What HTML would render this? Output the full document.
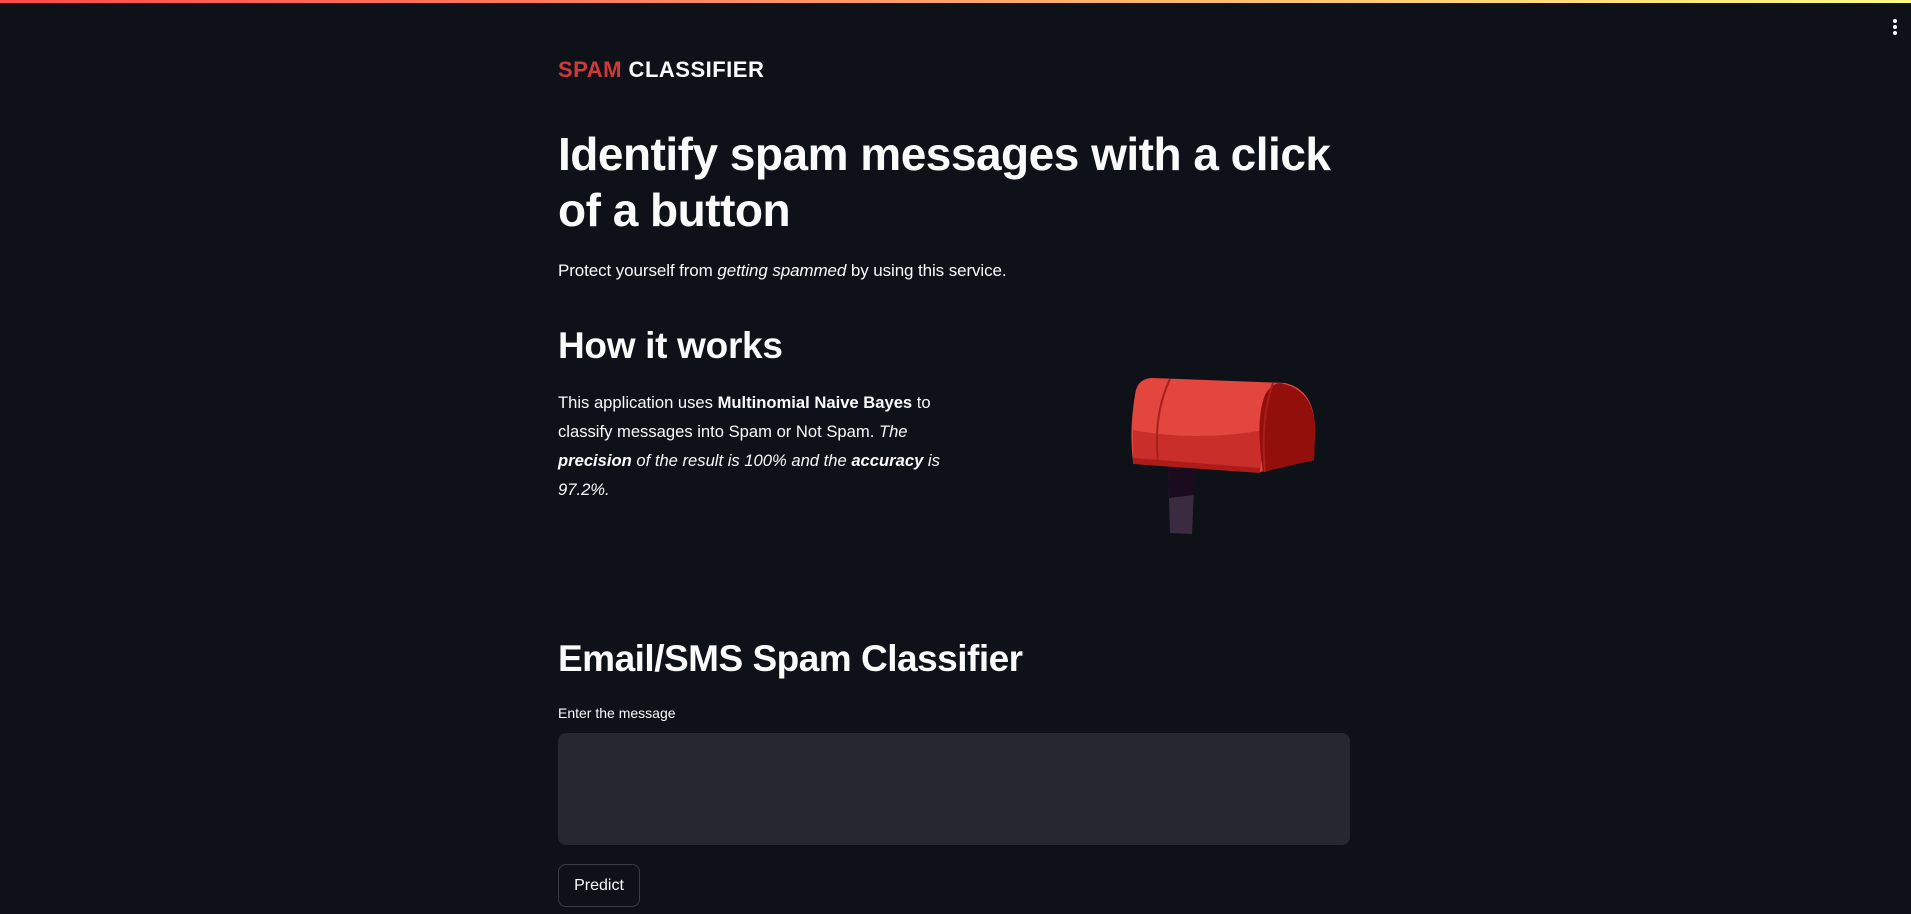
<!DOCTYPE html>
<html><head><meta charset="utf-8"><style>
body{margin:0;width:1911px;height:914px;background:#0e1117;overflow:hidden;font-family:"Liberation Sans",sans-serif;color:#fafafa;position:relative}
.bar{position:absolute;left:0;top:0;width:1911px;height:3px;background:linear-gradient(90deg,#ff4b4b,#fffd80)}
.a{position:absolute;white-space:nowrap}
</style></head><body>
<div class="bar"></div>
<div class="a" style="right:14px;top:19px;width:4px">
<div style="width:4px;height:4px;border-radius:2px;background:#fafafa;margin-bottom:2px"></div>
<div style="width:4px;height:4px;border-radius:2px;background:#fafafa;margin-bottom:2px"></div>
<div style="width:4px;height:4px;border-radius:2px;background:#fafafa"></div></div>
<div class="a" style="left:558px;top:57px;font-size:22px;font-weight:bold;letter-spacing:0.5px"><span style="color:#d0393c">SPAM</span> CLASSIFIER</div>
<div class="a" style="left:558px;top:126px;font-size:46px;font-weight:bold;line-height:56px;letter-spacing:-0.5px">Identify spam messages with a click<br>of a button</div>
<div class="a" style="left:558px;top:260px;font-size:17px;line-height:22px;letter-spacing:-0.1px">Protect yourself from <i>getting spammed</i> by using this service.</div>
<div class="a" style="left:558px;top:324px;font-size:37px;font-weight:bold;line-height:44px;letter-spacing:-0.3px">How it works</div>
<div class="a" style="left:558px;top:388px;font-size:16.6px;line-height:29px">This application uses <b>Multinomial Naive Bayes</b> to<br>classify messages into Spam or Not Spam. <i>The<br><b>precision</b> of the result is 100% and the <b>accuracy</b> is<br>97.2%.</i></div>
<svg class="a" style="left:1125px;top:370px" width="200" height="170" viewBox="0 0 200 170">
<polygon points="43,95 70,97 67,164 45,163" fill="#3b2b40"/>
<polygon points="43,95 70,97 69,125 44,128" fill="#1a0b1e"/>
<path d="M10,25 Q12,8 28,8 L160,13 Q190,20 190,60 L189,90 L135,102 L8,92 Q4,60 10,25Z" fill="#e2463f"/>
<path d="M8,60 Q70,72 140,60 L135,102 L8,92Z" fill="#c92e2a"/>
<path d="M8,88 L135,98 L135,103 L8,94Z" fill="#ad1c18"/>
<path d="M155,13 Q190,20 190,60 L189,90 L138,102 Q130,50 140,25 Q146,14 155,13Z" fill="#930f0c"/>
<path d="M45,9 Q28,45 33,92" stroke="#a91f1c" stroke-width="2" fill="none"/>
<path d="M148,13 Q135,50 140,102" stroke="#a91f1c" stroke-width="2" fill="none"/>
</svg>
<div class="a" style="left:558px;top:637px;font-size:37px;font-weight:bold;line-height:44px;letter-spacing:-0.5px">Email/SMS Spam Classifier</div>
<div class="a" style="left:558px;top:705px;font-size:14px">Enter the message</div>
<div class="a" style="left:558px;top:733px;width:792px;height:112px;background:#262730;border-radius:8px"></div>
<div class="a" style="left:558px;top:864px;width:82px;height:43px;border:1px solid #3a3d47;border-radius:8px;box-sizing:border-box;font-size:16px;line-height:41px;text-align:center">Predict</div>
</body></html>
